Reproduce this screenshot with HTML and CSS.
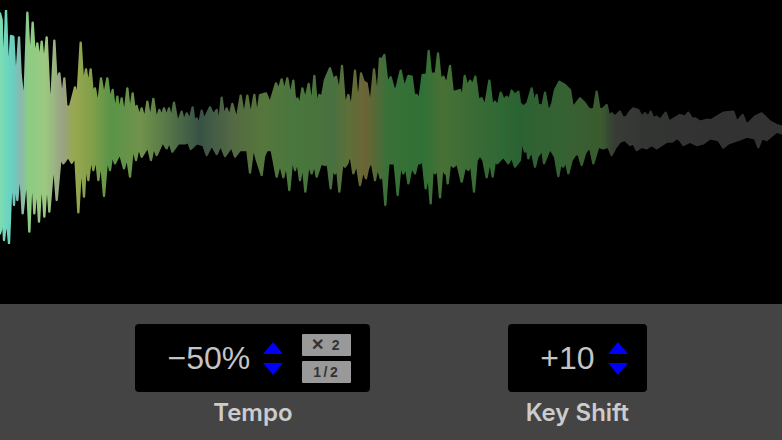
FILE: index.html
```html
<!DOCTYPE html>
<html lang="en">
<head>
<meta charset="utf-8">
<title>Tempo and Key Shift</title>
<link rel="stylesheet" href="styles.css">
</head>
<body>
<main class="player">
  <section class="wave">
    <svg class="wave-svg" viewBox="0 0 2346 912" preserveAspectRatio="none" aria-hidden="true">
      <defs>
        <linearGradient id="spectrum" x1="0" y1="0" x2="2346" y2="0" gradientUnits="userSpaceOnUse">
          <stop offset="0" stop-color="#80dcb0"/>
          <stop offset="0.006" stop-color="#70d8bc"/>
          <stop offset="0.016" stop-color="#68d0c0"/>
          <stop offset="0.026" stop-color="#88b8b0"/>
          <stop offset="0.036" stop-color="#8ccc84"/>
          <stop offset="0.058" stop-color="#9cc880"/>
          <stop offset="0.08" stop-color="#98a284"/>
          <stop offset="0.094" stop-color="#98a850"/>
          <stop offset="0.115" stop-color="#84a04a"/>
          <stop offset="0.142" stop-color="#5a9446"/>
          <stop offset="0.18" stop-color="#70924c"/>
          <stop offset="0.215" stop-color="#567648"/>
          <stop offset="0.255" stop-color="#385244"/>
          <stop offset="0.295" stop-color="#526844"/>
          <stop offset="0.335" stop-color="#56763c"/>
          <stop offset="0.385" stop-color="#48763c"/>
          <stop offset="0.425" stop-color="#487040"/>
          <stop offset="0.445" stop-color="#5c7038"/>
          <stop offset="0.468" stop-color="#6c6436"/>
          <stop offset="0.495" stop-color="#3a7038"/>
          <stop offset="0.54" stop-color="#2f7034"/>
          <stop offset="0.565" stop-color="#487036"/>
          <stop offset="0.64" stop-color="#2e6834"/>
          <stop offset="0.665" stop-color="#2c6232"/>
          <stop offset="0.72" stop-color="#366232"/>
          <stop offset="0.77" stop-color="#3a5a2e"/>
          <stop offset="0.785" stop-color="#383c36"/>
          <stop offset="0.83" stop-color="#323432"/>
          <stop offset="1" stop-color="#323232"/>
        </linearGradient>
        <filter id="soften" x="0" y="0" width="100%" height="100%">
          <feGaussianBlur stdDeviation="1.2"/>
        </filter>
      </defs>
      <polygon class="wave-shape" points="0,40 5,60 10,260 18,30 25,250 33,108 40,110 45,210 50,220 57,112 62,225 68,280 74,280 82,38 90,200 98,68 105,180 112,130 119,190 125,125 132,200 140,112 148,285 155,285 163,122 170,250 178,220 186,300 193,235 199,320 210,320 218,290 225,262 232,300 242,128 250,260 258,208 265,260 272,208 279,290 285,265 294,320 303,235 312,290 322,235 330,300 338,270 345,340 352,290 358,340 365,295 373,350 382,265 390,340 398,280 405,340 410,318 418,350 425,325 434,360 442,305 451,360 460,297 469,360 478,330 485,350 492,325 500,350 507,325 514,360 522,308 533,370 545,335 552,365 560,340 569,360 578,322 584,375 590,355 597,375 605,332 612,360 630,322 640,345 650,330 657,375 665,293 672,350 680,325 688,350 697,312 710,360 722,287 732,350 742,287 752,350 763,285 771,350 780,285 798,280 810,310 828,250 836,270 845,238 853,275 862,235 871,290 880,242 886,310 892,295 899,320 907,265 916,300 926,252 935,320 943,228 951,320 958,285 966,290 975,240 990,205 1000,240 1008,230 1018,280 1026,198 1035,320 1045,285 1054,330 1065,212 1074,320 1083,220 1091,245 1100,250 1111,320 1122,208 1132,300 1140,175 1146,180 1153,165 1162,250 1172,232 1185,280 1193,250 1202,212 1213,265 1225,228 1235,230 1242,285 1250,285 1258,300 1268,225 1280,225 1286,153 1293,225 1300,220 1307,225 1314,160 1322,240 1330,230 1340,255 1350,198 1358,275 1365,275 1380,270 1387,300 1394,228 1402,260 1410,242 1418,255 1426,230 1435,300 1445,295 1455,320 1468,242 1477,320 1485,305 1493,320 1502,278 1511,300 1520,290 1528,300 1535,272 1545,285 1555,275 1560,310 1570,320 1582,310 1595,265 1603,310 1610,285 1615,320 1620,315 1627,320 1635,278 1643,325 1650,328 1657,310 1665,270 1678,245 1695,255 1710,270 1718,320 1725,315 1740,295 1755,310 1765,325 1775,330 1782,325 1790,275 1798,325 1805,330 1820,315 1828,350 1835,340 1845,350 1860,335 1870,355 1880,350 1890,335 1900,325 1915,330 1925,350 1935,340 1945,350 1952,335 1960,355 1970,350 1980,360 1997,338 2007,365 2015,360 2040,345 2055,350 2065,338 2075,355 2085,355 2100,365 2120,360 2135,360 2150,350 2170,338 2200,335 2210,365 2215,360 2228,345 2238,370 2245,370 2265,350 2285,340 2300,355 2310,365 2330,375 2346,380 2346,400 2330,395 2300,420 2285,415 2275,442 2265,415 2240,410 2220,418 2200,425 2185,430 2170,443 2155,420 2130,415 2110,430 2090,435 2070,425 2050,435 2040,420 2030,415 2015,425 2000,425 1985,435 1970,445 1955,435 1940,445 1925,440 1910,450 1900,430 1890,435 1875,420 1860,425 1848,440 1835,465 1825,440 1810,445 1795,440 1780,490 1772,450 1765,445 1755,460 1745,495 1735,460 1725,465 1715,480 1705,520 1697,480 1690,500 1682,490 1675,528 1665,470 1650,445 1640,470 1632,490 1626,440 1620,460 1612,470 1605,500 1595,450 1585,475 1580,440 1575,455 1565,420 1560,480 1545,500 1535,470 1525,490 1510,470 1492,490 1485,480 1478,530 1470,480 1460,532 1450,480 1440,465 1430,480 1422,575 1413,490 1405,510 1395,500 1385,545 1372,490 1360,500 1350,490 1343,550 1338,495 1335,520 1327,500 1320,592 1312,500 1305,520 1298,500 1292,610 1285,520 1277,565 1268,480 1260,490 1252,490 1245,520 1235,500 1225,550 1218,500 1210,520 1202,490 1193,585 1184,490 1175,490 1165,490 1156,615 1148,510 1142,535 1133,500 1125,540 1116,490 1108,495 1103,510 1098,535 1089,510 1080,555 1070,490 1060,520 1054,480 1048,465 1042,490 1035,500 1027,490 1018,575 1011,500 1005,520 999,500 992,565 983,490 975,495 963,490 950,530 943,490 935,520 926,490 916,575 908,490 900,540 892,480 885,510 877,470 868,570 859,490 850,532 840,490 830,530 815,450 800,450 792,470 785,525 770,478 760,440 750,518 742,450 720,450 705,470 695,440 675,468 662,435 650,462 635,435 620,465 610,435 590,430 572,447 565,425 555,430 535,430 517,455 508,425 500,445 488,425 470,465 461,440 453,480 444,440 425,470 416,440 408,480 399,440 390,530 381,470 372,505 360,460 345,490 337,460 330,510 322,470 312,588 303,480 295,540 288,470 280,510 273,470 265,540 258,480 252,590 244,480 235,637 226,470 215,488 205,470 190,490 182,470 170,600 161,480 148,635 141,530 133,650 125,520 117,665 110,540 103,640 96,500 88,695 80,520 68,640 60,500 52,600 47,520 42,615 36,500 27,730 20,650 12,720 8,620 3,690 0,700"/>
    </svg>
  </section>
  <section class="controls">
    <div class="control">
      <div class="control-box">
        <span class="value">−50%</span>
        <div class="stepper">
          <svg class="arrow" viewBox="0 0 20 12" aria-hidden="true"><polygon points="10,0 20,12 0,12"/></svg>
          <svg class="arrow" viewBox="0 0 20 12" aria-hidden="true"><polygon points="0,0 20,0 10,12"/></svg>
        </div>
        <div class="multipliers">
          <button class="multiplier" type="button"><span class="times">✕</span> 2</button>
          <button class="multiplier" type="button">1/2</button>
        </div>
      </div>
      <span class="label">Tempo</span>
    </div>
    <div class="control">
      <div class="control-box">
        <span class="value">+10</span>
        <div class="stepper">
          <svg class="arrow" viewBox="0 0 20 12" aria-hidden="true"><polygon points="10,0 20,12 0,12"/></svg>
          <svg class="arrow" viewBox="0 0 20 12" aria-hidden="true"><polygon points="0,0 20,0 10,12"/></svg>
        </div>
      </div>
      <span class="label">Key Shift</span>
    </div>
  </section>
</main>
</body>
</html>
```
FILE: styles.css
```css
* { box-sizing: border-box; }
html, body { margin: 0; height: 100%; background: #000; }
.player {
  width: 782px;
  height: 440px;
  display: flex;
  flex-direction: column;
  overflow: hidden;
  font-family: Inter, "Liberation Sans", sans-serif;
}
.wave { height: 304px; background: #000; }
.wave-svg { display: block; width: 782px; height: 304px; }
.wave-shape {
  fill: url(#spectrum);
  stroke: url(#spectrum);
  stroke-width: 7;
  stroke-linejoin: round;
  filter: url(#soften);
}
.controls {
  flex: 1;
  background: #444;
  display: flex;
  justify-content: center;
  align-items: flex-start;
  gap: 138px;
  padding: 20px 0 0 0;
}
.control { display: flex; flex-direction: column; align-items: center; }
.control-box {
  height: 68px;
  background: #000;
  border-radius: 4px;
  display: flex;
  align-items: center;
  padding: 0 19px 0 32px;
}
.value {
  font-family: "Liberation Sans", Arial, sans-serif;
  font-size: 32px;
  font-weight: 400;
  color: #c4c4c4;
  line-height: 1;
  white-space: nowrap;
}
.stepper {
  display: flex;
  flex-direction: column;
  gap: 9px;
  margin-left: 13px;
}
.arrow { display: block; width: 20px; height: 12px; fill: #00f; }
.multipliers {
  display: flex;
  flex-direction: column;
  gap: 5px;
  margin-left: 19px;
}
.multiplier {
  width: 49px;
  height: 22px;
  padding: 0;
  border: 0;
  border-radius: 1px;
  background: #999;
  color: #333;
  font-family: "Liberation Sans", sans-serif;
  font-size: 14px;
  font-weight: 700;
  letter-spacing: 2.5px;
  line-height: 22px;
  text-align: center;
}
.times { font-size: 16px; letter-spacing: 1px; }
.label {
  margin-top: 8px;
  font-size: 24px;
  font-weight: 600;
  line-height: 26px;
  color: #ccc;
}
```
